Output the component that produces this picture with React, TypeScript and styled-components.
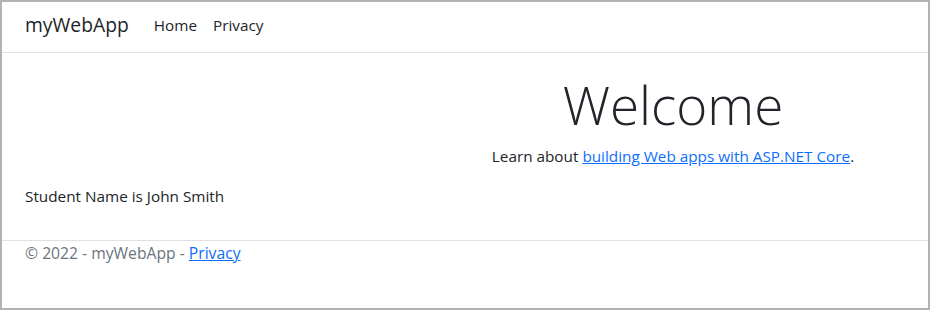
import * as React from "react";
import styled, { createGlobalStyle } from "styled-components";

const GlobalStyle = createGlobalStyle`
  html, body {
    margin: 0;
    padding: 0;
    background: #ffffff;
  }
  body {
    font-family: "Open Sans", "Noto Sans", sans-serif;
    font-size: 15.3px;
    color: #212529;
  }
`;

const Frame = styled.div`
  box-sizing: border-box;
  width: 930px;
  height: 310px;
  border: 2px solid #b3b3b3;
  display: flex;
  flex-direction: column;
  background: #ffffff;
`;

const NavBar = styled.header`
  box-sizing: border-box;
  height: 51px;
  padding: 0 23px 5px;
  border-bottom: 1px solid #dee2e6;
  display: flex;
  align-items: center;
  gap: 25px;
`;

const Brand = styled.a`
  font-size: 19.3px;
  color: #212529;
  text-decoration: none;
`;

const NavLinks = styled.nav`
  display: flex;
  gap: 16px;
`;

const NavLink = styled.a`
  color: #212529;
  text-decoration: none;
`;

const Main = styled.main`
  flex: 1;
  padding: 20px 23px 0;
  display: grid;
  grid-template-columns: 416px 1fr;
  align-content: start;
`;

const Hero = styled.div`
  grid-column: 2;
  text-align: center;
`;

const Title = styled.h1`
  margin: 0 0 8px;
  font-size: 53px;
  font-weight: 300;
  line-height: 1.2;
`;

const Lead = styled.p`
  margin: 0;
  line-height: 1.5;
`;

const Link = styled.a`
  color: #0d6efd;
  text-decoration: underline;
`;

const StudentName = styled.p`
  grid-column: 1 / span 2;
  margin: 17px 0 0;
  line-height: 1.5;
`;

const Footer = styled.footer`
  border-top: 1px solid #dee2e6;
  padding: 0 23px;
  height: 67px;
  font-size: 15.7px;
  color: #6c757d;
  line-height: 24px;
`;

export default function App() {
  return (
    <>
      <GlobalStyle />
      <Frame>
        <NavBar>
          <Brand href="#">myWebApp</Brand>
          <NavLinks>
            <NavLink href="#">Home</NavLink>
            <NavLink href="#">Privacy</NavLink>
          </NavLinks>
        </NavBar>
        <Main>
          <Hero>
            <Title>Welcome</Title>
            <Lead>
              Learn about <Link href="#">building Web apps with ASP.NET Core</Link>.
            </Lead>
          </Hero>
          <StudentName>Student Name is John Smith</StudentName>
        </Main>
        <Footer>
          &copy; 2022 - myWebApp - <Link href="#">Privacy</Link>
        </Footer>
      </Frame>
    </>
  );
}
